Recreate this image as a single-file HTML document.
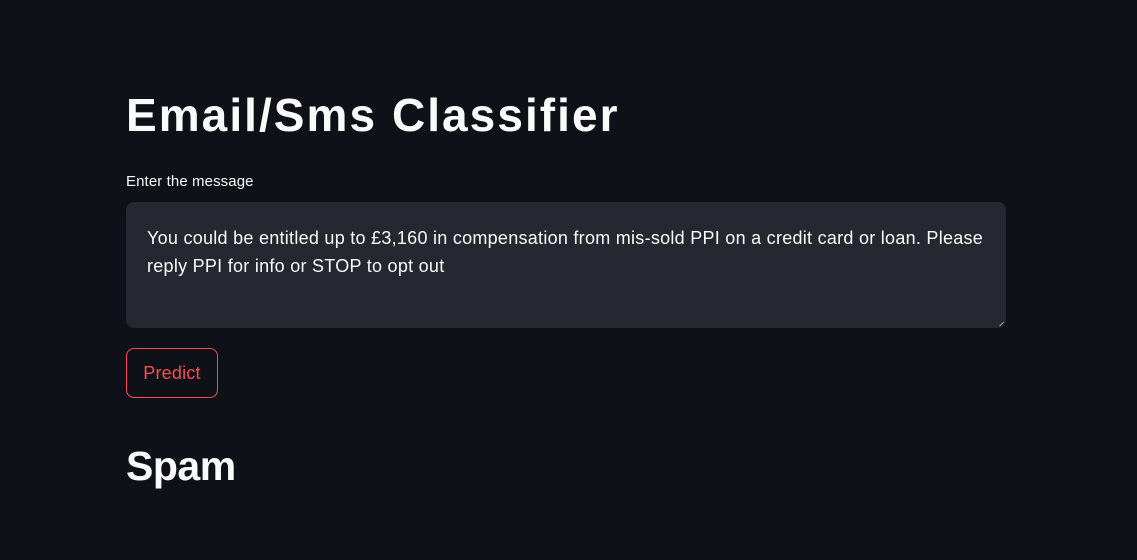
<!DOCTYPE html>
<html><head><meta charset="utf-8"><style>
html,body{margin:0;padding:0;background:#0e1117;width:1137px;height:560px;overflow:hidden;font-family:"Liberation Sans",sans-serif;color:#fafafa}
.t{position:absolute;left:126px;top:88px;font-size:46px;font-weight:bold;letter-spacing:2.05px;margin:0;white-space:nowrap}
.l{position:absolute;left:126px;top:173px;font-size:15px;letter-spacing:0.1px}
.ta{position:absolute;left:126px;top:202px;width:880px;height:126px;background:#262730;border-radius:8px}
.tx{position:absolute;left:147px;top:224px;width:870px;font-size:18px;line-height:28px;letter-spacing:0.27px;white-space:nowrap}
.h{position:absolute;right:3px;bottom:3px;width:6px;height:6px;border-right:1px solid #999;transform:rotate(45deg)}
.b{position:absolute;left:126px;top:348px;width:90px;height:48px;border:1px solid #ff4b4b;border-radius:8px;color:#ff4b4b;font-size:18px;line-height:48px;text-align:center;letter-spacing:0.2px}
.s{position:absolute;left:126px;top:443px;font-size:41px;font-weight:bold;letter-spacing:-0.5px}
</style></head><body>
<div class="t">Email/Sms Classifier</div>
<div class="l">Enter the message</div>
<div class="ta"><div class="h"></div></div>
<div class="tx">You could be entitled up to £3,160 in compensation from mis-sold PPI on a credit card or loan. Please<br>reply PPI for info or STOP to opt out</div>
<div class="b">Predict</div>
<div class="s">Spam</div>
</body></html>
